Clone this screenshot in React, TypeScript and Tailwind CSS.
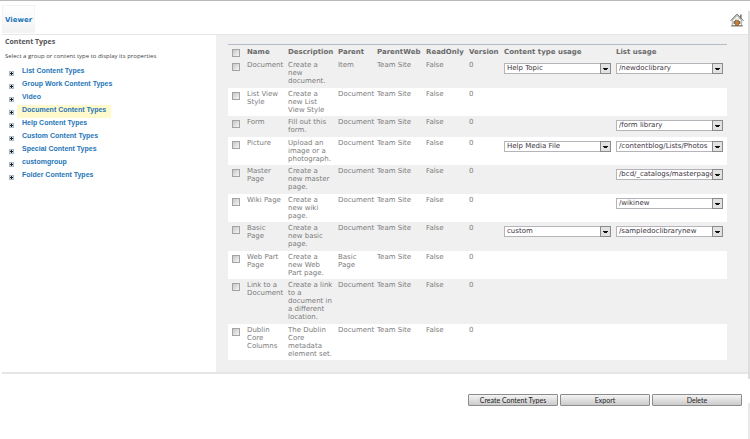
import { useState } from "react";

interface ContentType {
  name: string;
  description: string;
  parent: string;
  usage?: string;
  list?: string;
}

const groups = [
  "List Content Types",
  "Group Work Content Types",
  "Video",
  "Document Content Types",
  "Help Content Types",
  "Custom Content Types",
  "Special Content Types",
  "customgroup",
  "Folder Content Types",
];

const contentTypes: ContentType[] = [
  { name: "Document", description: "Create a\nnew\ndocument.", parent: "Item", usage: "Help Topic", list: "/newdoclibrary" },
  { name: "List View\nStyle", description: "Create a\nnew List\nView Style", parent: "Document" },
  { name: "Form", description: "Fill out this\nform.", parent: "Document", list: "/form library" },
  { name: "Picture", description: "Upload an\nimage or a\nphotograph.", parent: "Document", usage: "Help Media File", list: "/contentblog/Lists/Photos" },
  { name: "Master\nPage", description: "Create a\nnew master\npage.", parent: "Document", list: "/bcd/_catalogs/masterpage" },
  { name: "Wiki Page", description: "Create a\nnew wiki\npage.", parent: "Document", list: "/wikinew" },
  { name: "Basic\nPage", description: "Create a\nnew basic\npage.", parent: "Document", usage: "custom", list: "/sampledoclibrarynew" },
  { name: "Web Part\nPage", description: "Create a\nnew Web\nPart page.", parent: "Basic\nPage" },
  { name: "Link to a\nDocument", description: "Create a link\nto a\ndocument in\na different\nlocation.", parent: "Document" },
  { name: "Dublin\nCore\nColumns", description: "The Dublin\nCore\nmetadata\nelement set.", parent: "Document" },
];

const headings = ["Name", "Description", "Parent", "ParentWeb", "ReadOnly", "Version", "Content type usage", "List usage"];

function HomeIcon() {
  return (
    <svg viewBox="0 0 14 14" className="block size-3.5" aria-hidden="true">
      <rect x="10" y="1.5" width="1.6" height="4" fill="#777" />
      <path d="M2.3 7.5 7 2.5 11.7 7.5v5.2H2.3z" fill="#f6f6f3" stroke="#77776f" strokeWidth=".6" />
      <path d="M.6 7.8 7 1.2 13.4 7.8" fill="none" stroke="#5a5a5a" strokeWidth="1" />
      <path d="M5 6.2h4" stroke="#c9c9c4" strokeWidth=".8" />
      <rect x="3.6" y="8" width="1.4" height="3" fill="#6e7468" />
      <rect x="9" y="8" width="1.4" height="3" fill="#6e7468" />
      <rect x="5.4" y="7.5" width="3.2" height="5.2" fill="#d87a22" stroke="#6d4a1c" strokeWidth=".5" />
      <path d="M1 12.9h12" stroke="#66665c" strokeWidth=".9" />
    </svg>
  );
}

function ExpandIcon() {
  return (
    <svg viewBox="0 0 5 5" className="block size-[5px]" shapeRendering="crispEdges" aria-hidden="true">
      <rect width="5" height="5" fill="#a9b9cc" />
      <rect x="1" y="1" width="3" height="3" fill="#dde3ea" />
      <path d="M1 2h3v1H1zM2 1h1v3H2z" fill="#1c1c1c" />
    </svg>
  );
}

function Checkbox({ label }: { label: string }) {
  return (
    <input
      type="checkbox"
      aria-label={label}
      className="block size-2 appearance-none border border-[#a3a3a3] bg-linear-to-br from-[#c6c6c6] to-[#f7f7f7] checked:bg-[#1f6fb5]"
    />
  );
}

function Dropdown({ value, label }: { value: string; label: string }) {
  return (
    <div className="relative mt-0.5 h-[11px] w-[107px]">
      <select
        aria-label={label}
        defaultValue={value}
        className="block h-full w-full appearance-none overflow-hidden border border-[#b4b4ba] bg-white pr-2.5 pl-0.5 text-[7px] leading-2 text-[#3c3440]"
      >
        <option>{value}</option>
      </select>
      <svg
        viewBox="0 0 11 11"
        className="pointer-events-none absolute top-0 right-0 size-[11px]"
        shapeRendering="crispEdges"
        aria-hidden="true"
      >
        <rect width="11" height="11" fill="#8b8b8b" />
        <rect x="1" y="1" width="9" height="9" fill="#e2e2e2" />
        <path d="M3 5h5v1H3zM4 6h3v1H4z" fill="#111" />
      </svg>
    </div>
  );
}

function ActionButton({ children }: { children: string }) {
  return (
    <button
      type="button"
      className="h-3 w-[90px] rounded-[1px] border border-[#8c8c8c] bg-linear-to-b from-[#f4f4f4] to-[#cbcbcb] font-['Lato',sans-serif] text-[7px] leading-2 text-[#222]"
    >
      {children}
    </button>
  );
}

export default function App() {
  const [selected, setSelected] = useState("Document Content Types");

  return (
    <div className="flex min-h-screen border-t border-[#b9b9bd] bg-white font-['DejaVu_Sans',sans-serif] text-[7px] leading-2 text-[#7c7c7c]">
      <div className="min-w-0 grow pl-0.5">
        <header className="flex items-center justify-between border-b border-[#e6e6e6] pt-1 pr-1">
          <a
            href="#viewer"
            className="mb-px border border-[#f3f3f3] bg-linear-to-b from-white to-[#f3f3f3] px-0.5 pt-[9px] pb-[7px] text-[7px] leading-2.5 font-bold text-[#1f76b8]"
          >
            Viewer
          </a>
          <a href="#home" aria-label="Home">
            <HomeIcon />
          </a>
        </header>

        <div className="flex border-b-2 border-[#e6e6e6]">
          <nav className="w-[214px] shrink-0 pt-[3px] pl-[3px]">
            <h2 className="font-['Open_Sans',sans-serif] text-[7px] font-bold text-[#555]">Content Types</h2>
            <p className="mt-1.5 font-['Open_Sans',sans-serif] text-[6px] leading-2 text-[#444]">
              Select a group or content type to display its properties
            </p>
            <ul className="mt-1.5">
              {groups.map((group) => (
                <li key={group} className="flex h-[13px] items-center gap-[3px] pl-1">
                  <div className="pt-0.5">
                    <ExpandIcon />
                  </div>
                  <button
                    type="button"
                    onClick={() => setSelected(group)}
                    className={`h-full px-[5px] pb-1 font-['Liberation_Sans',sans-serif] text-[7px] leading-2 font-bold text-[#1f76b8] ${
                      selected === group ? "bg-[#fff9cc]" : ""
                    }`}
                  >
                    {group}
                  </button>
                </li>
              ))}
            </ul>
          </nav>

          <main className="min-w-0 grow bg-[#f0f0f0] pt-[9px] pr-[21px] pb-3 pl-3">
            <table className="w-full table-fixed border-collapse">
              <colgroup>
                <col className="w-[17px]" />
                <col className="w-[41px]" />
                <col className="w-[50px]" />
                <col className="w-[39px]" />
                <col className="w-[49px]" />
                <col className="w-[43px]" />
                <col className="w-[35px]" />
                <col className="w-[112px]" />
                <col className="w-[113px]" />
              </colgroup>
              <thead>
                <tr className="h-3.5 border-t border-[#b5bcc6] text-left text-[#6a6a6a]">
                  <th className="pt-0.5 pl-1">
                    <Checkbox label="Select all" />
                  </th>
                  {headings.map((heading) => (
                    <th key={heading} className="pl-0.5 font-bold whitespace-nowrap">
                      {heading}
                    </th>
                  ))}
                </tr>
              </thead>
              <tbody>
                {contentTypes.map((type) => (
                  <tr
                    key={type.name}
                    className="align-top whitespace-pre odd:border-b odd:border-[#f0f0f0] even:bg-white [&>td]:py-0.5 [&>td]:pl-0.5"
                  >
                    <td>
                      <div className="pt-0.5 pl-0.5">
                        <Checkbox label={type.name} />
                      </div>
                    </td>
                    <td>{type.name}</td>
                    <td>{type.description}</td>
                    <td>{type.parent}</td>
                    <td>Team Site</td>
                    <td>False</td>
                    <td>0</td>
                    <td>{type.usage && <Dropdown value={type.usage} label="Content type usage" />}</td>
                    <td>{type.list && <Dropdown value={type.list} label="List usage" />}</td>
                  </tr>
                ))}
              </tbody>
            </table>
          </main>
        </div>

        <footer className="flex justify-end gap-0.5 pt-5 pr-1.5">
          <ActionButton>Create Content Types</ActionButton>
          <ActionButton>Export</ActionButton>
          <ActionButton>Delete</ActionButton>
        </footer>
      </div>

      <div className="flex w-0.5 shrink-0 flex-col gap-6 pt-2.5">
        <div className="grow bg-[#dedede]" />
        <div className="h-9 bg-[#e8e8e8]" />
      </div>
    </div>
  );
}
